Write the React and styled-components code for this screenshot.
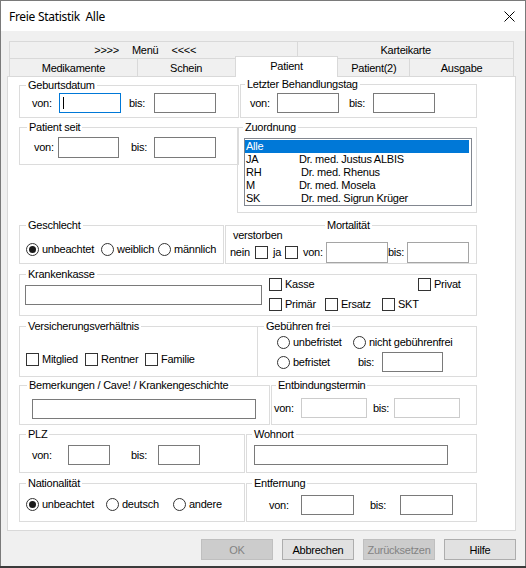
import React from 'react';
import styled, { createGlobalStyle, css } from 'styled-components';

const GlobalStyle = createGlobalStyle`
  html, body {
    margin: 0;
    padding: 0;
    background: #3b3b3b;
  }
  body {
    font-family: "Liberation Sans", Arial, sans-serif;
    font-size: 11px;
    letter-spacing: -0.25px;
    color: #000;
  }
`;

const Window = styled.div`
  width: 526px;
  height: 566px;
  box-sizing: border-box;
  border: 1px solid #7a7a7a;
  border-bottom: none;
  background: #f0f0f0;
  display: flex;
  flex-direction: column;
`;

const TitleBar = styled.div`
  height: 30px;
  flex-shrink: 0;
  background: #fff;
  display: flex;
  align-items: center;
  justify-content: space-between;
  padding: 0 10px 0 8px;
`;

const Caption = styled.span`
  font-family: "Noto Sans", "Open Sans", sans-serif;
  font-size: 12px;
  letter-spacing: -0.3px;
  white-space: pre;
  margin-top: 1px;
`;

const Body = styled.div`
  flex: 1;
  padding: 10px 9px 0 6px;
  display: flex;
  flex-direction: column;
`;

const TabStrip = styled.div`
  margin: 0 2px;
  display: flex;
  flex-direction: column;
`;

const TabRow = styled.div`
  display: flex;
  height: ${p => p.$h}px;
  margin-top: ${p => p.$mt || 0}px;
`;

const Tab = styled.div`
  box-sizing: border-box;
  width: ${p => p.$w}px;
  height: 100%;
  border: 1px solid #d9d9d9;
  background: #f0f0f0;
  display: flex;
  align-items: center;
  justify-content: center;
  padding-right: ${p => p.$pr || 0}px;
  white-space: pre;
  & + & {
    margin-left: -1px;
  }
  ${p => p.$active && css`
    position: relative;
    z-index: 2;
    background: #fff;
    height: ${p.$h + 2}px;
    margin-top: -2px;
    border-bottom: none;
    padding-bottom: 3px;
  `}
`;

const Arrows = styled.span`
  margin: 0 ${p => p.$gap}px;
`;

const Panel = styled.div`
  box-sizing: border-box;
  height: 455px;
  margin-top: -1px;
  border: 1px solid #d9d9d9;
  background: #fff;
  padding: 7px 0 0 11px;
  display: flex;
  flex-direction: column;
`;

const Row = styled.div`
  display: flex;
  align-items: flex-start;
  margin-top: ${p => p.$mt || 0}px;
`;

const Column = styled.div`
  display: flex;
  flex-direction: column;
  width: ${p => p.$w}px;
  margin-left: ${p => p.$ml || 0}px;
`;

const GroupBox = styled.div`
  position: relative;
  box-sizing: border-box;
  flex-shrink: 0;
  width: ${p => p.$w}px;
  height: ${p => p.$h}px;
  margin-left: ${p => p.$ml || 0}px;
  margin-top: ${p => p.$mt || 0}px;
  padding-top: ${p => p.$pt || 0}px;
  padding-left: ${p => p.$pl || 0}px;
  border: 1px solid #dcdcdc;
  display: flex;
  flex-direction: ${p => (p.$row ? 'row' : 'column')};
  align-items: flex-start;
`;

const GroupTitle = styled.span`
  position: absolute;
  top: -7px;
  left: ${p => p.$x}px;
  padding: 0 2px;
  background: #fff;
  line-height: 13px;
  white-space: nowrap;
`;

const Line = styled.div`
  display: flex;
  align-items: center;
  height: ${p => p.$h || 13}px;
  margin-top: ${p => p.$mt || 0}px;
  padding-left: ${p => p.$pl || 0}px;
`;

const Label = styled.span`
  flex-shrink: 0;
  width: ${p => (p.$w ? `${p.$w}px` : 'auto')};
  margin-left: ${p => p.$ml || 0}px;
  line-height: 13px;
  white-space: nowrap;
`;

const TextBox = styled.div`
  position: relative;
  box-sizing: border-box;
  flex-shrink: 0;
  width: ${p => p.$w}px;
  height: ${p => p.$h || 20}px;
  margin-left: ${p => p.$ml || 0}px;
  margin-top: ${p => p.$mt || 0}px;
  border: 1px solid ${p => p.$tone || '#7a7a7a'};
  background: #fff;
`;

const Caret = styled.span`
  position: absolute;
  left: 3px;
  top: 3px;
  width: 1px;
  height: 12px;
  background: #000;
`;

const Choice = styled.label`
  display: flex;
  align-items: center;
  gap: 3px;
  flex-shrink: 0;
  width: ${p => (p.$w ? `${p.$w}px` : 'auto')};
  margin-left: ${p => p.$ml || 0}px;
  line-height: 13px;
  white-space: nowrap;
`;

const Check = styled.span`
  box-sizing: border-box;
  flex-shrink: 0;
  width: 13px;
  height: 13px;
  margin-left: ${p => p.$ml || 0}px;
  border: 1px solid #333;
  background: #fff;
`;

const Radio = styled.span`
  position: relative;
  box-sizing: border-box;
  flex-shrink: 0;
  width: 13px;
  height: 13px;
  border: 1px solid #333;
  border-radius: 50%;
  background: #fff;
  ${p => p.$on && css`
    &::after {
      content: '';
      position: absolute;
      left: 2px;
      top: 2px;
      width: 7px;
      height: 7px;
      border-radius: 50%;
      background: #1a1a1a;
    }
  `}
`;

const ListBox = styled.div`
  box-sizing: border-box;
  width: 228px;
  height: 68px;
  border: 1px solid #828790;
  padding-top: 1px;
  background: #fff;
`;

const ListItem = styled.div`
  display: flex;
  height: 13px;
  line-height: 13px;
  margin-right: 2px;
  white-space: pre;
  background: ${p => (p.$selected ? '#0078d7' : 'transparent')};
  color: ${p => (p.$selected ? '#fff' : '#000')};
`;

const Code = styled.span`
  width: 53px;
  padding-left: 1px;
  flex-shrink: 0;
`;

const Doctor = styled.span`
  padding-left: ${p => p.$indent || 0}px;
`;

const ButtonRow = styled.div`
  display: flex;
  justify-content: flex-end;
  gap: 9px;
  margin-top: 8px;
`;

const Button = styled.div`
  box-sizing: border-box;
  width: 72px;
  height: 21px;
  border: 1px solid ${p => (p.$disabled ? '#bfbfbf' : '#adadad')};
  background: ${p => (p.$disabled ? '#cccccc' : '#e1e1e1')};
  color: ${p => (p.$disabled ? '#838383' : '#000')};
  display: flex;
  align-items: center;
  justify-content: center;
`;

const CloseIcon = () => (
  <svg width="11" height="11" viewBox="0 0 11 11">
    <path d="M0.5 0.5 L10.5 10.5 M10.5 0.5 L0.5 10.5" stroke="#000" strokeWidth="1" fill="none" />
  </svg>
);

const doctors = [
  { code: 'JA', name: 'Dr. med. Justus ALBIS', indent: 0 },
  { code: 'RH', name: 'Dr. med. Rhenus', indent: 2 },
  { code: 'M', name: 'Dr. med. Mosela', indent: 0 },
  { code: 'SK', name: 'Dr. med. Sigrun Krüger', indent: 2 },
];

const App = () => {
  return (
    <>
      <GlobalStyle />
      <Window>
        <TitleBar>
          <Caption>Freie Statistik  Alle</Caption>
          <CloseIcon />
        </TitleBar>

        <Body>
          <TabStrip>
            <TabRow $h={18}>
              <Tab $w={290} $pr={17}>
                <span>&gt;&gt;&gt;&gt;</span>
                <Arrows $gap={13}>Menü</Arrows>
                <span>&lt;&lt;&lt;&lt;</span>
              </Tab>
              <Tab $w={217}>Karteikarte</Tab>
            </TabRow>
            <TabRow $h={19} $mt={-1}>
              <Tab $w={129}>Medikamente</Tab>
              <Tab $w={99}>Schein</Tab>
              <Tab $w={104} $h={19} $active>Patient</Tab>
              <Tab $w={73}>Patient(2)</Tab>
              <Tab $w={105}>Ausgabe</Tab>
            </TabRow>
          </TabStrip>

          <Panel>
            <Row>
              <Column $w={220}>
                <GroupBox $w={220} $h={33} $mt={1} $pt={7} $pl={12}>
                  <GroupTitle $x={6}>Geburtsdatum</GroupTitle>
                  <Line $h={20}>
                    <Label $w={27}>von:</Label>
                    <TextBox $w={62} $tone="#0078d7"><Caret /></TextBox>
                    <Label $w={25} $ml={8}>bis:</Label>
                    <TextBox $w={62} />
                  </Line>
                </GroupBox>
                <GroupBox $w={220} $h={38} $mt={9} $pt={9} $pl={14}>
                  <GroupTitle $x={7}>Patient seit</GroupTitle>
                  <Line $h={21}>
                    <Label $w={24}>von:</Label>
                    <TextBox $w={61} $h={21} />
                    <Label $w={23} $ml={12}>bis:</Label>
                    <TextBox $w={62} $h={21} />
                  </Line>
                </GroupBox>
              </Column>

              <Column $w={240} $ml={-2}>
                <GroupBox $w={237} $h={34} $ml={3} $pt={8} $pl={9}>
                  <GroupTitle $x={4}>Letzter Behandlungstag</GroupTitle>
                  <Line $h={20}>
                    <Label $w={27}>von:</Label>
                    <TextBox $w={62} />
                    <Label $w={24} $ml={10}>bis:</Label>
                    <TextBox $w={62} />
                  </Line>
                </GroupBox>
                <GroupBox $w={240} $h={86} $mt={9} $pt={10} $pl={6}>
                  <GroupTitle $x={5}>Zuordnung</GroupTitle>
                  <ListBox>
                    <ListItem $selected>
                      <Code>Alle</Code>
                    </ListItem>
                    {doctors.map(d => (
                      <ListItem key={d.code}>
                        <Code>{d.code}</Code>
                        <Doctor $indent={d.indent}>{d.name}</Doctor>
                      </ListItem>
                    ))}
                  </ListBox>
                </GroupBox>
              </Column>
            </Row>

            <Row $mt={12}>
              <GroupBox $w={205} $h={39} $pt={17} $pl={6}>
                <GroupTitle $x={6}>Geschlecht</GroupTitle>
                <Line>
                  <Choice $w={75}><Radio $on />unbeachtet</Choice>
                  <Choice $w={57}><Radio />weiblich</Choice>
                  <Choice><Radio />männlich</Choice>
                </Line>
              </GroupBox>
              <GroupBox $w={252} $h={39} $ml={1} $pt={3}>
                <GroupTitle $x={99}>Mortalität</GroupTitle>
                <Line $pl={7}>
                  <Label>verstorben</Label>
                </Line>
                <Line $h={21} $pl={4}>
                  <Label $w={25}>nein</Label>
                  <Check />
                  <Label $w={12} $ml={5}>ja</Label>
                  <Check />
                  <Label $w={23} $ml={5}>von:</Label>
                  <TextBox $w={62} $h={21} $tone="#a5a5a5" />
                  <Label $w={19}>bis:</Label>
                  <TextBox $w={62} $h={21} $tone="#a5a5a5" />
                </Line>
              </GroupBox>
            </Row>

            <Row $mt={10}>
              <GroupBox $w={458} $h={42} $row $pt={3} $pl={5}>
                <GroupTitle $x={6}>Krankenkasse</GroupTitle>
                <TextBox $w={237} $mt={7} />
                <Column $ml={7}>
                  <Line>
                    <Choice $w={149}><Check />Kasse</Choice>
                    <Choice><Check />Privat</Choice>
                  </Line>
                  <Line $mt={7}>
                    <Choice $w={56}><Check />Primär</Choice>
                    <Choice $w={57}><Check />Ersatz</Choice>
                    <Choice><Check />SKT</Choice>
                  </Line>
                </Column>
              </GroupBox>
            </Row>

            <Row $mt={10}>
              <GroupBox $w={239} $h={51} $pt={26} $pl={6}>
                <GroupTitle $x={6}>Versicherungsverhältnis</GroupTitle>
                <Line>
                  <Choice $w={59}><Check />Mitglied</Choice>
                  <Choice $w={60}><Check />Rentner</Choice>
                  <Choice><Check />Familie</Choice>
                </Line>
              </GroupBox>
              <GroupBox $w={220} $h={51} $ml={-1} $pt={9} $pl={19}>
                <GroupTitle $x={6}>Gebühren frei</GroupTitle>
                <Line>
                  <Choice $w={76}><Radio />unbefristet</Choice>
                  <Choice><Radio />nicht gebührenfrei</Choice>
                </Line>
                <Line $h={20} $mt={3}>
                  <Choice $w={81}><Radio />befristet</Choice>
                  <Label $w={24}>bis:</Label>
                  <TextBox $w={61} />
                </Line>
              </GroupBox>
            </Row>

            <Row $mt={8}>
              <GroupBox $w={251} $h={40} $pt={13} $pl={12}>
                <GroupTitle $x={7}>Bemerkungen / Cave! / Krankengeschichte</GroupTitle>
                <TextBox $w={224} />
              </GroupBox>
              <GroupBox $w={206} $h={40} $ml={1} $pt={12} $pl={2}>
                <GroupTitle $x={4}>Entbindungstermin</GroupTitle>
                <Line $h={20}>
                  <Label $w={27}>von:</Label>
                  <TextBox $w={66} $tone="#cccccc" />
                  <Label $w={21} $ml={6}>bis:</Label>
                  <TextBox $w={66} $tone="#cccccc" />
                </Line>
              </GroupBox>
            </Row>

            <Row $mt={9}>
              <GroupBox $w={226} $h={39} $pt={10} $pl={12}>
                <GroupTitle $x={6}>PLZ</GroupTitle>
                <Line $h={20}>
                  <Label $w={36}>von:</Label>
                  <TextBox $w={42} />
                  <Label $w={27} $ml={21}>bis:</Label>
                  <TextBox $w={42} />
                </Line>
              </GroupBox>
              <GroupBox $w={231} $h={39} $ml={1} $pt={10} $pl={7}>
                <GroupTitle $x={5}>Wohnort</GroupTitle>
                <TextBox $w={194} />
              </GroupBox>
            </Row>

            <Row $mt={10}>
              <GroupBox $w={226} $h={39} $pt={14} $pl={6}>
                <GroupTitle $x={6}>Nationalität</GroupTitle>
                <Line>
                  <Choice $w={80}><Radio $on />unbeachtet</Choice>
                  <Choice $w={67}><Radio />deutsch</Choice>
                  <Choice><Radio />andere</Choice>
                </Line>
              </GroupBox>
              <GroupBox $w={231} $h={39} $ml={1} $pt={11} $pl={22}>
                <GroupTitle $x={5}>Entfernung</GroupTitle>
                <Line $h={20}>
                  <Label $w={32}>von:</Label>
                  <TextBox $w={53} />
                  <Label $w={30} $ml={16}>bis:</Label>
                  <TextBox $w={53} />
                </Line>
              </GroupBox>
            </Row>
          </Panel>

          <ButtonRow>
            <Button $disabled>OK</Button>
            <Button>Abbrechen</Button>
            <Button $disabled>Zurücksetzen</Button>
            <Button>Hilfe</Button>
          </ButtonRow>
        </Body>
      </Window>
    </>
  );
};

export default App;
